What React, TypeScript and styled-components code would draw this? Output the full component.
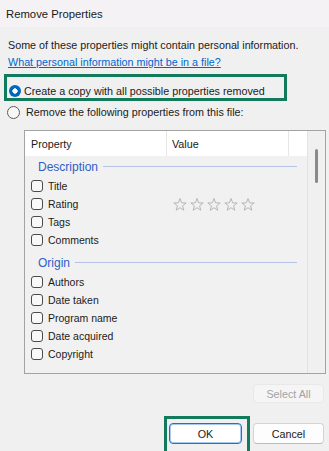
import React from "react";
import styled, { createGlobalStyle } from "styled-components";

const GlobalStyle = createGlobalStyle`
  html, body { margin: 0; padding: 0; background: #f0f0f0; }
  body { font-family: "Liberation Sans", Arial, sans-serif; color: #1b1b1b; }
  * { box-sizing: border-box; }
`;

const Dialog = styled.div`
  width: 329px;
  height: 451px;
  overflow: hidden;
  background: #f0f0f0;
  display: flex;
  flex-direction: column;
  font-size: 10.75px;
`;

const TitleBar = styled.div`
  height: 27px;
  flex: none;
  display: flex;
  align-items: center;
  padding-left: 6px;
  font-size: 11.3px;
  color: #1a1a1a;
  background: #f4f2f4;
`;

const Body = styled.div`
  display: flex;
  flex-direction: column;
  padding: 0 3px 0 8px;
`;

const Intro = styled.p`
  margin: 10px 0 0;
  line-height: 17px;
`;

const HelpLink = styled.a`
  align-self: flex-start;
  line-height: 17px;
  color: #0066cc;
  text-decoration: underline;
`;

const RadioFrame = styled.div`
  margin: 3px 0 0 -4px;
  width: 283px;
  border: 3px solid #127b5c;
  padding: 7px 0 0 2px;
`;

const RadioRow = styled.label<{ $gap: number; $offset?: number }>`
  display: flex;
  align-items: center;
  gap: ${(p) => p.$gap}px;
  margin-left: ${(p) => p.$offset ?? 0}px;
  line-height: ${(p) => (p.$offset ? 17 : 14)}px;
  margin-top: ${(p) => (p.$offset ? 3 : 0)}px;
`;

const RadioDot = styled.span<{ $checked?: boolean }>`
  flex: none;
  width: ${(p) => (p.$checked ? 12 : 13)}px;
  height: ${(p) => (p.$checked ? 12 : 13)}px;
  border-radius: 50%;
  ${(p) =>
    p.$checked
      ? `background: radial-gradient(circle, #ffffff 0 2.4px, #0067c0 2.9px);`
      : `background: #f7f7f7; border: 1px solid #5c5c5c;`}
`;

const ListBox = styled.div`
  margin: 9px 0 0 16px;
  width: 302px;
  height: 244px;
  border: 1px solid #a3a3a3;
  display: flex;
  overflow: hidden;
`;

const ListContent = styled.div`
  width: 282px;
  flex: none;
  display: flex;
  flex-direction: column;
  background: #f1f1f1;
  overflow: hidden;
`;

const HeaderRow = styled.div`
  height: 25px;
  flex: none;
  display: grid;
  grid-template-columns: 142px 122px 1fr;
  background: #ffffff;
`;

const HeaderCell = styled.div<{ $divider?: boolean; $pad: number }>`
  display: flex;
  align-items: center;
  padding-left: ${(p) => p.$pad}px;
  border-right: ${(p) => (p.$divider ? "1px solid #e6e6e6" : "none")};
  color: #1a1a1a;
`;

const GroupHeader = styled.div<{ $space: number }>`
  flex: none;
  height: 21px;
  margin-top: ${(p) => p.$space}px;
  display: flex;
  align-items: center;
  padding: 0 10px 0 13px;
  font-size: 12px;
  color: #2f5fc6;
`;

const GroupRule = styled.span`
  flex: 1;
  height: 1px;
  margin-left: 5px;
  background: #b3c2e0;
`;

const PropRow = styled.div`
  flex: none;
  height: 18px;
  display: grid;
  grid-template-columns: 142px 1fr;
  align-items: center;
  font-size: 10.5px;
`;

const PropName = styled.label`
  display: flex;
  align-items: center;
  gap: 5px;
  padding-left: 6px;
`;

const CheckBox = styled.span`
  flex: none;
  width: 12px;
  height: 12px;
  border: 1px solid #4a4a4a;
  border-radius: 3px;
  background: #f8f8f8;
`;

const PropValue = styled.div`
  display: flex;
  align-items: center;
  gap: 3px;
  padding-left: 6px;
`;

const ScrollTrack = styled.div`
  flex: 1;
  border-left: 1px solid #e3e3e3;
  background: #f0f0f0;
`;

const ScrollThumb = styled.div`
  margin: 18px 0 0 7px;
  width: 3px;
  height: 34px;
  border-radius: 2px;
  background: #8a8a8a;
`;

const SelectAllButton = styled.button`
  align-self: flex-end;
  margin: 10px 2px 0 0;
  width: 71px;
  height: 19px;
  padding: 0;
  border: 1px solid #e8e8e8;
  border-radius: 4px;
  background: #f5f5f5;
  color: #a3a3a3;
  font: inherit;
`;

const ButtonRow = styled.div`
  display: flex;
  justify-content: flex-end;
  align-items: flex-start;
  gap: 3px;
  margin: 13px 2px 0 0;
`;

const OkFrame = styled.div`
  border: 3px solid #127b5c;
  padding: 4px 5px 12px 2px;
`;

const DialogButton = styled.button<{ $primary?: boolean }>`
  height: 21px;
  padding: 0;
  font: inherit;
  color: #1a1a1a;
  border-radius: 4px;
  ${(p) =>
    p.$primary
      ? `width: 73px; background: #ffffff; border: 1px solid #2371c6; box-shadow: inset 0 0 0 1px #a8caef;`
      : `width: 71px; margin-top: 7px; background: #fdfdfd; border: 1px solid #d4d4d4; border-bottom-color: #bdbdbd;`}
`;

const STAR =
  "7,0.5 8.59,4.82 13.18,4.99 9.57,7.83 10.82,12.26 7,9.7 3.18,12.26 4.43,7.83 0.82,4.99 5.41,4.82";

const Star = () => (
  <svg width="14" height="13" viewBox="0 0 14 13">
    <polygon points={STAR} fill="none" stroke="#b6b6b6" strokeWidth="1" strokeLinejoin="round" />
  </svg>
);

const Stars = () => (
  <PropValue>
    {[0, 1, 2, 3, 4].map((i) => (
      <Star key={i} />
    ))}
  </PropValue>
);

type Group = { name: string; space: number; items: string[] };

const groups: Group[] = [
  { name: "Description", space: 0, items: ["Title", "Rating", "Tags", "Comments"] },
  { name: "Origin", space: 3, items: ["Authors", "Date taken", "Program name", "Date acquired", "Copyright"] },
  { name: "Content", space: 5, items: [] },
];

export default function App() {
  return (
    <>
      <GlobalStyle />
      <Dialog>
        <TitleBar>Remove Properties</TitleBar>
        <Body>
          <Intro>Some of these properties might contain personal information.</Intro>
          <HelpLink href="#">What personal information might be in a file?</HelpLink>
          <RadioFrame>
            <RadioRow $gap={3}>
              <RadioDot $checked />
              Create a copy with all possible properties removed
            </RadioRow>
          </RadioFrame>
          <RadioRow $gap={6} $offset={-1}>
            <RadioDot />
            Remove the following properties from this file:
          </RadioRow>
          <ListBox>
            <ListContent>
              <HeaderRow>
                <HeaderCell $divider $pad={6}>Property</HeaderCell>
                <HeaderCell $divider $pad={5}>Value</HeaderCell>
                <HeaderCell $pad={0} />
              </HeaderRow>
              {groups.map((g) => (
                <React.Fragment key={g.name}>
                  <GroupHeader $space={g.space}>
                    {g.name}
                    <GroupRule />
                  </GroupHeader>
                  {g.items.map((item) => (
                    <PropRow key={item}>
                      <PropName>
                        <CheckBox />
                        {item}
                      </PropName>
                      {item === "Rating" ? <Stars /> : <PropValue />}
                    </PropRow>
                  ))}
                </React.Fragment>
              ))}
            </ListContent>
            <ScrollTrack>
              <ScrollThumb />
            </ScrollTrack>
          </ListBox>
          <SelectAllButton disabled>Select All</SelectAllButton>
          <ButtonRow>
            <OkFrame>
              <DialogButton $primary>OK</DialogButton>
            </OkFrame>
            <DialogButton>Cancel</DialogButton>
          </ButtonRow>
        </Body>
      </Dialog>
    </>
  );
}
